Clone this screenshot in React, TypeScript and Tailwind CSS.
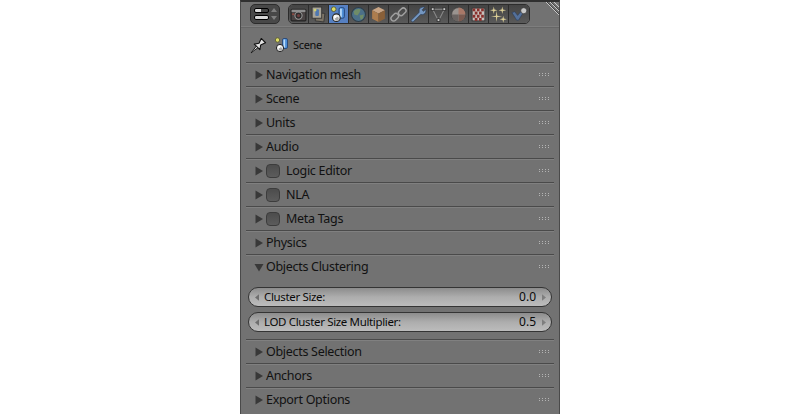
import React from "react";

const SceneIcon = ({ s = 16 }: { s?: number }) => (
  <svg width={s} height={s} viewBox="0 0 16 16">
    <circle cx="3.5" cy="3" r="2.2" fill="#dede68" stroke="#55552a" strokeWidth="0.8" />
    <rect x="8.5" y="1.5" width="5" height="10" rx="1.5" fill="#4f8fd8" stroke="#1f3f70" strokeWidth="0.8" />
    <rect x="9.5" y="2.5" width="1.6" height="8" fill="#bcdcf8" />
    <circle cx="6" cy="11" r="3.6" fill="#eeeeee" stroke="#222" strokeWidth="1" />
    <circle cx="6.5" cy="12" r="1.8" fill="#aaa" />
    <circle cx="5" cy="10" r="1.2" fill="#fff" />
  </svg>
);

const Camera = () => (
  <svg width="16" height="16" viewBox="0 0 16 16">
    <rect x="1" y="3" width="14" height="11" rx="1" fill="#4a4444" stroke="#222" />
    <rect x="1.5" y="3.5" width="13" height="2.2" fill="#8e8e8e" />
    <circle cx="8" cy="9" r="3.4" fill="#2c2c2c" stroke="#989898" />
    <circle cx="8" cy="9" r="1.5" fill="#704040" />
    <rect x="2" y="7" width="2" height="1.5" fill="#904a40" />
  </svg>
);
const Layers = () => (
  <svg width="16" height="16" viewBox="0 0 16 16">
    <path d="M5 6 L14 7 L13 15 L5 14 Z" fill="#7c7466" stroke="#333" strokeWidth="0.8" />
    <rect x="2" y="1" width="9" height="10.5" fill="#a8a498" stroke="#333" strokeWidth="0.8" />
    <rect x="5" y="3" width="3.4" height="6.5" rx="1" fill="#4f78b0" />
    <circle cx="4.8" cy="3.8" r="1.3" fill="#d0d070" />
  </svg>
);
const World = () => (
  <svg width="16" height="16" viewBox="0 0 16 16">
    <circle cx="8" cy="8" r="6.6" fill="#4c7088" stroke="#2e3e4a" />
    <path d="M3.5 5 Q6 2 10 3 L9 6 L7 9 L4 8 Z M9 9 L13 8 L12 12 L10 13 Z" fill="#6f8c68" />
  </svg>
);
const Cube = () => (
  <svg width="16" height="16" viewBox="0 0 16 16">
    <path d="M8 1 L14 4 L8 7 L2 4 Z" fill="#c8a484" />
    <path d="M2 4 L8 7 L8 15 L2 12 Z" fill="#ad7d4e" />
    <path d="M14 4 L8 7 L8 15 L14 12 Z" fill="#8a6038" />
  </svg>
);
const Chain = () => (
  <svg width="16" height="16" viewBox="0 0 16 16" fill="none" stroke="#a0a0a0" strokeWidth="1.4">
    <rect x="0.5" y="8" width="8" height="5" rx="2.5" transform="rotate(-45 4.5 10.5)" />
    <rect x="7.5" y="3" width="8" height="5" rx="2.5" transform="rotate(-45 11.5 5.5)" />
  </svg>
);
const Wrench = () => (
  <svg width="16" height="16" viewBox="0 0 16 16">
    <path d="M2 15 L1 13.5 L8.5 6 Q8 3 10 1.5 Q12 0.5 14 1 L11.5 3.5 L12.5 5 L15 3 Q15.5 6 13.5 7.5 Q12 8.5 10 8 L3 15 Z" fill="#7496c0" stroke="#2f4058" strokeWidth="0.7" />
  </svg>
);
const Tri = () => (
  <svg width="16" height="16" viewBox="0 0 16 16">
    <path d="M2.5 3 L13.5 3 L8 14 Z" fill="none" stroke="#8a8a8a" strokeWidth="1" />
    <rect x="1.2" y="1.7" width="2.6" height="2.6" fill="#ccc" stroke="#222" strokeWidth="0.7" />
    <rect x="12.2" y="1.7" width="2.6" height="2.6" fill="#ccc" stroke="#222" strokeWidth="0.7" />
    <rect x="6.7" y="12" width="2.6" height="2.6" fill="#ccc" stroke="#222" strokeWidth="0.7" />
  </svg>
);
const Mat = () => (
  <svg width="16" height="16" viewBox="0 0 16 16">
    <circle cx="8" cy="8" r="6.5" fill="#9a9490" stroke="#333" strokeWidth="0.6" />
    <path d="M8 8 L8 1.5 A6.5 6.5 0 0 1 14.5 8 Z" fill="#a87868" />
    <path d="M8 8 L14.5 8 A6.5 6.5 0 0 1 8 14.5 Z" fill="#7a5a50" />
    <path d="M8 8 L8 14.5 A6.5 6.5 0 0 1 1.5 8 Z" fill="#6a6462" />
  </svg>
);
const Checker = () => (
  <svg width="16" height="16" viewBox="0 0 16 16">
    <rect x="2" y="2" width="12" height="12" fill="#c8c0bc" stroke="#333" strokeWidth="0.8" />
    {[
      [2, 2], [6, 2], [10, 2], [4, 5], [8, 5], [2, 8], [6, 8], [10, 8], [4, 11], [8, 11],
    ].map(([x, y]) => (
      <rect key={`${x}-${y}`} x={x + 0.5} y={y + 0.3} width="2.5" height="2.7" fill="#8a302c" />
    ))}
  </svg>
);
const Star = ({ x, y, r }: { x: number; y: number; r: number }) => (
  <path
    d={`M${x} ${y - r} L${x + 0.7} ${y - 0.7} L${x + r} ${y} L${x + 0.7} ${y + 0.7} L${x} ${y + r} L${x - 0.7} ${y + 0.7} L${x - r} ${y} L${x - 0.7} ${y - 0.7} Z`}
    fill="#dccf96"
  />
);
const Particles = () => (
  <svg width="18" height="18" viewBox="0 0 18 18">
    <Star x={4} y={4.5} r={4} />
    <Star x={13} y={4.5} r={4} />
    <Star x={7} y={11} r={6} />
    <Star x={14} y={14} r={3.8} />
  </svg>
);
const Physics = () => (
  <svg width="18" height="16" viewBox="0 0 18 16">
    <path d="M1 6 L4 5 L7 9 L12 3 L13 6 L8 14 L6 14 Z" fill="#54709a" stroke="#2a3c58" strokeWidth="0.6" />
    <circle cx="13.5" cy="4" r="3.2" fill="#c8c8c8" stroke="#333" strokeWidth="0.7" />
  </svg>
);
const Pin = () => (
  <svg width="18" height="18" viewBox="0 0 16 16">
    <path d="M1 15 L6 8.5 L7.5 10 Z" fill="#eee" stroke="#111" strokeWidth="0.8" />
    <path d="M3.8 7.2 L8 6.5 L10 2.2 L13.8 6 L9.5 8 L8.8 12.2 Z" fill="#e4e4e4" stroke="#111" strokeWidth="1" strokeLinejoin="round" />
  </svg>
);

const tabs = [Camera, Layers, SceneIcon, World, Cube, Chain, Wrench, Tri, Mat, Checker, Particles, Physics];

const Grip = () => (
  <div className="grid grid-cols-[repeat(4,1px)] gap-x-[2px] gap-y-[1px]">
    {Array.from({ length: 8 }).map((_, i) => (
      <span key={i} className="h-[1px] w-[1px] bg-[#b4b4b4]" />
    ))}
  </div>
);

const Panel = ({ label, check, open }: { label: string; check?: boolean; open?: boolean }) => (
  <div className="flex h-[24px] items-center border-t border-[#4a4a4a] pl-[8px] pr-[5px] shadow-[inset_0_1px_0_#808080]">
    <svg width="10" height="10" viewBox="0 0 10 10" className="shrink-0">
      <path d={open ? "M0.5 2 L9.5 2 L5 9.5 Z" : "M1.5 0.5 L9 5 L1.5 9.5 Z"} fill="#383838" />
    </svg>
    {check && (
      <span className="ml-[2px] h-[14px] w-[14px] shrink-0 rounded-[4px] border border-[#3c3c3c] bg-gradient-to-b from-[#4c4c4c] to-[#5c5c5c]" />
    )}
    <span className={`${check ? "ml-[6px]" : "ml-[2px]"} pt-[2px] text-[12.5px] leading-none tracking-[-0.3px] text-[#111]`}>{label}</span>
    <span className="ml-auto">
      <Grip />
    </span>
  </div>
);

const NumField = ({ label, value }: { label: string; value: string }) => (
  <div className="flex h-[20px] items-center rounded-[10px] border border-[#343434] bg-gradient-to-b from-[#8c8c8c] via-[#adadad] to-[#bcbcbc] pl-[6px] pr-[5px] text-[#0a0a0a]">
    <svg width="4" height="7" viewBox="0 0 5 8">
      <path d="M5 0 L0 4 L5 8 Z" fill="#6e6e6e" />
    </svg>
    <span className="ml-[5px] text-[11.5px] tracking-[-0.35px]">{label}</span>
    <span className="ml-auto mr-[6px] text-[12px]">{value}</span>
    <svg width="4" height="7" viewBox="0 0 5 8">
      <path d="M0 0 L5 4 L0 8 Z" fill="#7e7e7e" />
    </svg>
  </div>
);

export default function App() {
  return (
    <div className="flex h-[414px] w-[800px] justify-center overflow-hidden bg-white font-['Noto_Sans',sans-serif]">
      <div className="relative flex h-full w-[320px] flex-col overflow-hidden border-l border-r border-[#4a4a4a] border-t-2 border-t-[#303030] bg-[#727272]">
        <svg width="14" height="14" viewBox="0 0 14 14" className="absolute right-0 top-0">
          <path d="M1 0 L14 13 M5 0 L14 9 M9 0 L14 5" stroke="#c8c8c8" strokeWidth="1" />
          <path d="M2 0 L14 12 M6 0 L14 8" stroke="#444" strokeWidth="1" />
        </svg>
        <div className="flex h-[25px] items-start gap-[8px] border-b border-[#7e7e7e] pl-[9px] pt-[2px] shadow-[0_1px_0_#666]">
          <div className="flex h-[20px] w-[30px] items-center justify-center gap-[2px] rounded-[5px] border border-[#2c2c2c] bg-[#484848]">
            <div className="flex flex-col gap-[2px]">
              <span className="block h-[5px] w-[15px] rounded-[2px] border border-black bg-gradient-to-r from-[#d8d8d8] from-50% to-[#444] to-50%" />
              <span className="block h-[5px] w-[15px] rounded-[2px] border border-black bg-[#d8d8d8]" />
            </div>
            <svg width="6" height="14" viewBox="0 0 6 14">
              <path d="M3 1 L6 5 L0 5 Z M3 13 L6 9 L0 9 Z" fill="#808080" />
            </svg>
          </div>
          <div className="flex h-[20px] overflow-hidden rounded-[5px] border border-[#2c2c2c]">
            {tabs.map((Icon, i) => (
              <div
                key={i}
                className={`flex h-full w-[20px] items-center justify-center border-r border-[#2c2c2c] last:border-r-0 [&>svg]:h-[17px] [&>svg]:w-[17px] ${
                  i === 2 ? "bg-[#5680c2]" : "bg-gradient-to-b from-[#444444] to-[#5a5a5a]"
                }`}
              >
                <Icon />
              </div>
            ))}
          </div>
        </div>
        <div className="flex h-[35px] items-center pl-[9px] pt-[1px]">
          <Pin />
          <span className="ml-[6px]">
            <SceneIcon />
          </span>
          <span className="ml-[3px] text-[11px] tracking-[-0.3px] text-[#0c0c0c]">Scene</span>
        </div>
        <div className="flex flex-col px-[5px]">
          <Panel label="Navigation mesh" />
          <Panel label="Scene" />
          <Panel label="Units" />
          <Panel label="Audio" />
          <Panel label="Logic Editor" check />
          <Panel label="NLA" check />
          <Panel label="Meta Tags" check />
          <Panel label="Physics" />
          <Panel label="Objects Clustering" open />
          <div className="flex flex-col gap-[5px] px-[2px] pb-[7px] pt-[9px]">
            <NumField label="Cluster Size:" value="0.0" />
            <NumField label="LOD Cluster Size Multiplier:" value="0.5" />
          </div>
          <Panel label="Objects Selection" />
          <Panel label="Anchors" />
          <Panel label="Export Options" />
        </div>
      </div>
    </div>
  );
}
